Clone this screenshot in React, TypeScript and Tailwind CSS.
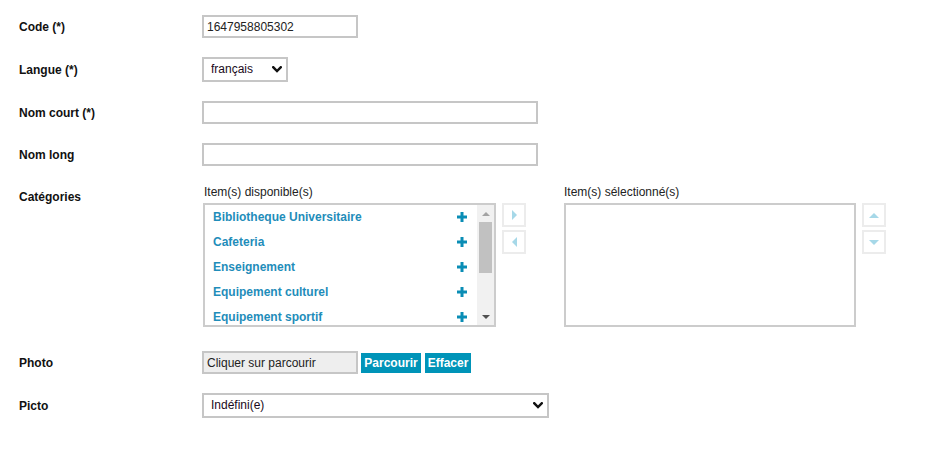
import React from "react";

const Chevron = () => (
  <svg width="10" height="7" viewBox="0 0 10 7" className="block">
    <path d="M1.2 1.2 L5 5 L8.8 1.2" fill="none" stroke="#111" strokeWidth="2.4" strokeLinecap="square" />
  </svg>
);

const Plus = () => (
  <svg width="10" height="10" viewBox="0 0 10 10" className="block">
    <rect x="3.5" y="0" width="3" height="10" fill="#0a8db5" />
    <rect x="0" y="3.5" width="10" height="3" fill="#0a8db5" />
  </svg>
);

const Tri = ({ dir, color }: { dir: "up" | "down" | "left" | "right"; color: string }) => {
  const pts: Record<string, string> = {
    up: "0,5 5,0 10,5",
    down: "0,0 10,0 5,5",
    right: "0,0 5,5 0,10",
    left: "5,0 0,5 5,10",
  };
  const horiz = dir === "left" || dir === "right";
  return (
    <svg width={horiz ? 5 : 10} height={horiz ? 10 : 5} viewBox={horiz ? "0 0 5 10" : "0 0 10 5"} className="block">
      <polygon points={pts[dir]} fill={color} />
    </svg>
  );
};

const SmallBtn = ({ dir }: { dir: "up" | "down" | "left" | "right" }) => (
  <div className="w-[24px] h-[24px] border-2 border-[#ececec] bg-white flex items-center justify-center">
    <Tri dir={dir} color="#a6d8e8" />
  </div>
);

const items = [
  "Bibliotheque Universitaire",
  "Cafeteria",
  "Enseignement",
  "Equipement culturel",
  "Equipement sportif",
];

function Label({ children, top }: { children: React.ReactNode; top?: boolean }) {
  return (
    <div className={`w-[183px] shrink-0 font-bold text-[#111] leading-[14px] ${top ? "pt-[5px]" : ""}`}>
      {children}
    </div>
  );
}

export default function App() {
  return (
    <div className="font-['Liberation_Sans',Arial,sans-serif] text-[12px] text-[#111] bg-white w-[931px] h-[455px] pl-[19px] pt-[15px]">
      {/* Code */}
      <div className="flex items-center h-[23px]">
        <Label>Code (*)</Label>
        <input
          readOnly
          value="1647958805302"
          className="w-[156px] h-[23px] border-2 border-[#c6c6c6] pl-[3px] text-[12px] text-[#222] outline-none bg-white"
        />
      </div>

      {/* Langue */}
      <div className="flex items-center h-[25px] mt-[19px]">
        <Label>Langue (*)</Label>
        <div className="relative w-[86px] h-[25px]">
          <select className="appearance-none w-full h-full border-2 border-[#c6c6c6] pl-[7px] pb-[1px] text-[12px] text-[#1a0a20] bg-white outline-none">
            <option>français</option>
          </select>
          <div className="absolute right-[6px] top-[9px] pointer-events-none">
            <Chevron />
          </div>
        </div>
      </div>

      {/* Nom court */}
      <div className="flex items-center h-[23px] mt-[19px]">
        <Label>Nom court (*)</Label>
        <input readOnly className="w-[336px] h-[23px] border-2 border-[#c6c6c6] outline-none bg-white" />
      </div>

      {/* Nom long */}
      <div className="flex items-center h-[23px] mt-[19px]">
        <Label>Nom long</Label>
        <input readOnly className="w-[336px] h-[23px] border-2 border-[#c6c6c6] outline-none bg-white" />
      </div>

      {/* Catégories */}
      <div className="flex items-start mt-[19px]">
        <Label top>Catégories</Label>
        <div className="flex items-start ml-[1px]">
          <div className="flex flex-col">
            <div className="leading-[14px] text-[#222] pl-[1px]">Item(s) disponible(s)</div>
            <div className="mt-[4px] w-[293px] h-[124px] border-2 border-[#cccccc] flex overflow-hidden">
              <div className="flex-1 overflow-hidden bg-white">
                {items.map((it) => (
                  <div key={it} className="h-[25px] flex items-center justify-between pl-[8px] pr-[10px] pb-[2px]">
                    <span className="font-bold text-[#1f8dba]">{it}</span>
                    <Plus />
                  </div>
                ))}
              </div>
              <div className="w-[17px] h-full bg-[#f1f1f1] flex flex-col items-center">
                <div className="h-[17px] flex items-center justify-center">
                  <svg width="8" height="4" viewBox="0 0 8 4" className="block">
                    <polygon points="0,4 4,0 8,4" fill="#a3a3a3" />
                  </svg>
                </div>
                <div className="w-[13px] h-[51px] bg-[#c1c1c1]" />
                <div className="flex-1" />
                <div className="h-[17px] flex items-center justify-center">
                  <svg width="8" height="4" viewBox="0 0 8 4" className="block">
                    <polygon points="0,0 8,0 4,4" fill="#505050" />
                  </svg>
                </div>
              </div>
            </div>
          </div>

          <div className="flex flex-col gap-[3px] mt-[18px] ml-[6px]">
            <SmallBtn dir="right" />
            <SmallBtn dir="left" />
          </div>

          <div className="flex flex-col ml-[38px]">
            <div className="leading-[14px] text-[#222]">Item(s) sélectionné(s)</div>
            <div className="mt-[4px] w-[292px] h-[124px] border-2 border-[#cccccc] bg-white" />
          </div>

          <div className="flex flex-col gap-[3px] mt-[18px] ml-[6px]">
            <SmallBtn dir="up" />
            <SmallBtn dir="down" />
          </div>
        </div>
      </div>

      {/* Photo */}
      <div className="flex items-center h-[23px] mt-[24px]">
        <Label>Photo</Label>
        <div className="w-[156px] h-[23px] border-2 border-[#c6c6c6] bg-[#eeeeee] pl-[3px] flex items-center text-[#222]">
          Cliquer sur parcourir
        </div>
        <div className="ml-[3px] w-[60px] h-[20px] bg-[#0094b8] text-white font-bold flex items-center justify-center">
          Parcourir
        </div>
        <div className="ml-[4px] w-[46px] h-[20px] bg-[#0094b8] text-white font-bold flex items-center justify-center">
          Effacer
        </div>
      </div>

      {/* Picto */}
      <div className="flex items-center h-[25px] mt-[19px]">
        <Label>Picto</Label>
        <div className="relative w-[347px] h-[25px]">
          <select className="appearance-none w-full h-full border-2 border-[#c6c6c6] pl-[7px] pb-[1px] text-[12px] text-[#1a0a20] bg-white outline-none">
            <option>Indéfini(e)</option>
          </select>
          <div className="absolute right-[6px] top-[9px] pointer-events-none">
            <Chevron />
          </div>
        </div>
      </div>
    </div>
  );
}
